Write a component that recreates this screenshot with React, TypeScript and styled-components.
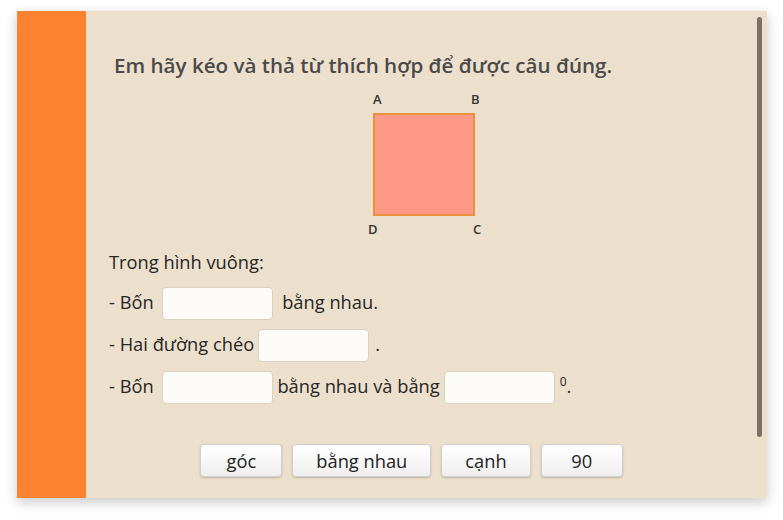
import React from "react";
import styled, { createGlobalStyle } from "styled-components";

const GlobalStyle = createGlobalStyle`
  html, body {
    margin: 0;
    min-height: 100vh;
    background: #ffffff;
    font-family: "Open Sans", "Noto Sans", sans-serif;
  }
  #root {
    padding: 11px 0 22px 17px;
  }
`;

const Card = styled.div`
  position: relative;
  width: 750px;
  height: 487px;
  display: flex;
  background: #ece0cc;
  box-shadow: 0 4px 12px rgba(0, 0, 0, 0.22);
`;

const Strip = styled.div`
  width: 69px;
  flex: none;
  background: #fb8231;
`;

const Content = styled.div`
  flex: 1;
  display: flex;
  flex-direction: column;
  padding: 40px 26px 0 23px;
  color: #262626;
`;

const Title = styled.h1`
  margin: 0;
  padding-left: 5px;
  font-size: 20.6px;
  line-height: 28px;
  font-weight: 600;
  color: #4a4a4a;
`;

const Figure = styled.div`
  position: relative;
  align-self: center;
  width: 120px;
  height: 145px;
  margin-top: 13px;
`;

const Square = styled.div`
  position: absolute;
  left: 8px;
  top: 21px;
  width: 98px;
  height: 99px;
  background: #fe9985;
  border: 2px solid #e9923f;
`;

const Corner = styled.span<{ $x: number; $y: number }>`
  position: absolute;
  left: ${(p) => p.$x}px;
  top: ${(p) => p.$y}px;
  font-size: 13px;
  line-height: 14px;
  font-weight: 600;
  color: #333;
`;

const Lead = styled.div`
  margin-top: 6px;
  font-size: 18.3px;
  line-height: 38px;
`;

const Line = styled.div`
  font-size: 18.3px;
  line-height: 42px;
  height: 42px;
  white-space: nowrap;
`;

const Blank = styled.span`
  display: inline-block;
  vertical-align: middle;
  width: 109px;
  height: 31px;
  margin: -2px 4px 0;
  background: #fcfbf8;
  border: 1px solid #d8d0c2;
  border-radius: 4px;
`;

const Dot = styled.span`
  margin-left: 2px;
`;

const Deg = styled.span`
  position: relative;
  top: -7px;
  margin-left: 1px;
  font-size: 12px;
`;

const Choices = styled.div`
  display: flex;
  justify-content: center;
  gap: 10px;
  margin-top: 37px;
  margin-right: 27px;
`;

const Choice = styled.button`
  min-width: 82px;
  height: 33px;
  padding: 0 23px;
  font-family: "Open Sans", sans-serif;
  font-size: 18.3px;
  color: #222;
  background: linear-gradient(#ffffff, #efefef);
  border: 1px solid #cfcfcf;
  border-radius: 4px;
  box-shadow: 0 1px 2px rgba(0, 0, 0, 0.2);
`;

const Scroll = styled.div`
  position: absolute;
  right: 5px;
  top: 6px;
  width: 5px;
  height: 420px;
  border-radius: 3px;
  background: #7b7266;
`;

const words = ["góc", "bằng nhau", "cạnh", "90"];

function App() {
  return (
    <>
      <GlobalStyle />
      <Card>
        <Strip />
        <Content>
          <Title>Em hãy kéo và thả từ thích hợp để được câu đúng.</Title>
          <Figure>
            <Corner $x={8} $y={0}>A</Corner>
            <Corner $x={106} $y={0}>B</Corner>
            <Square />
            <Corner $x={3} $y={130}>D</Corner>
            <Corner $x={108} $y={130}>C</Corner>
          </Figure>
          <Lead>Trong hình vuông:</Lead>
          <Line>
            - Bốn <Blank /> bằng nhau.
          </Line>
          <Line>
            - Hai đường chéo<Blank />
            <Dot>.</Dot>
          </Line>
          <Line>
            - Bốn <Blank />bằng nhau và bằng<Blank />
            <Deg>0</Deg>.
          </Line>
          <Choices>
            {words.map((w) => (
              <Choice key={w}>{w}</Choice>
            ))}
          </Choices>
        </Content>
        <Scroll />
      </Card>
    </>
  );
}

export default App;
